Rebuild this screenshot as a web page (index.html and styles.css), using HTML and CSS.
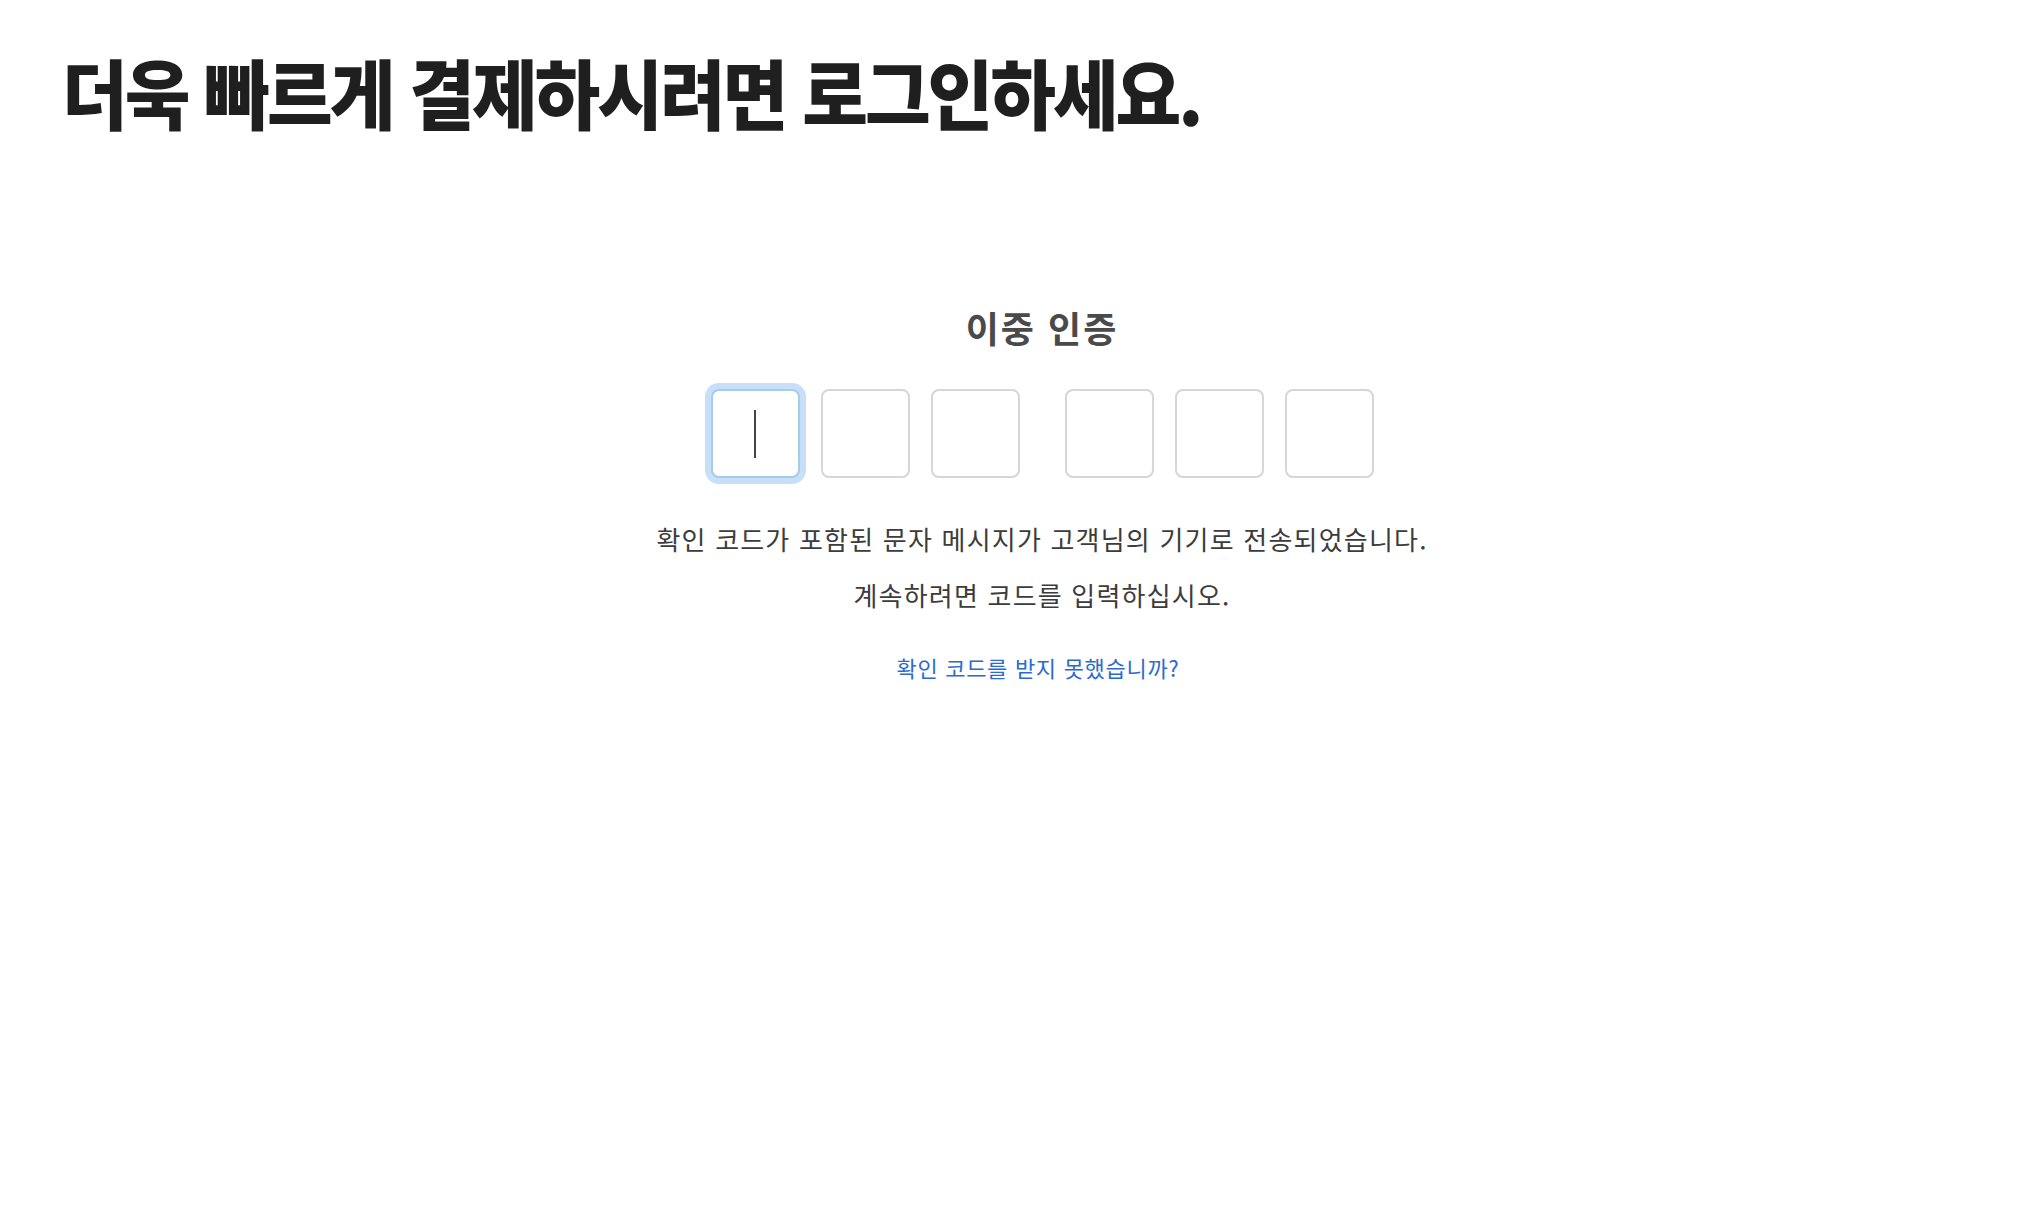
FILE: index.html
```html
<!DOCTYPE html>
<html lang="ko">
<head>
<meta charset="utf-8">
<title>이중 인증</title>
<link rel="stylesheet" href="styles.css">
</head>
<body>
<main class="page">
  <h1 class="headline">더욱 빠르게 결제하시려면 로그인하세요.</h1>
  <section class="verify">
    <h2 class="verify-title">이중 인증</h2>
    <div class="code">
      <div class="code-group">
        <div class="digit is-focused"><span class="caret"></span></div>
        <div class="digit"></div>
        <div class="digit"></div>
      </div>
      <div class="code-group">
        <div class="digit"></div>
        <div class="digit"></div>
        <div class="digit"></div>
      </div>
    </div>
    <p class="msg">확인 코드가 포함된 문자 메시지가 고객님의 기기로 전송되었습니다.<br>계속하려면 코드를 입력하십시오.</p>
    <a class="resend" href="#">확인 코드를 받지 못했습니까?</a>
  </section>
</main>
</body>
</html>
```
FILE: styles.css
```css
html, body {
  margin: 0;
  padding: 0;
  background: #ffffff;
}
body {
  font-family: "Noto Sans CJK KR", "Noto Sans", sans-serif;
  color: #3a3a3a;
}
.page {
  display: flex;
  flex-direction: column;
}
.headline {
  margin: 0;
  padding: 53px 0 0 62px;
  font-size: 76px;
  line-height: 1;
  font-weight: 900;
  letter-spacing: -3.25px;
  word-spacing: 0;
  color: #1f1f1f;
  white-space: nowrap;
  transform: scaleX(0.94);
  transform-origin: 62px 0;
}
.verify {
  display: flex;
  flex-direction: column;
  align-items: center;
  padding-left: 40px;
  padding-top: 180px;
}
.verify-title {
  margin: 0;
  font-size: 36px;
  line-height: 1;
  font-weight: 700;
  letter-spacing: 2px;
  color: #4a4a4a;
}
.code {
  display: flex;
  gap: 45px;
  margin-top: 44px;
}
.code-group {
  display: flex;
  gap: 21px;
}
.digit {
  box-sizing: border-box;
  width: 89px;
  height: 89px;
  border: 2px solid #d6d6d6;
  border-radius: 8px;
  display: flex;
  align-items: center;
  justify-content: center;
  background: #fff;
}
.digit.is-focused {
  border-color: #a5cde6;
  box-shadow: 0 0 0 6px #c8dff9;
}
.caret {
  display: block;
  width: 2px;
  height: 48px;
  background: #444;
}
.msg {
  margin: 33px 0 0;
  font-size: 26px;
  line-height: 56px;
  letter-spacing: 1.2px;
  text-align: center;
  color: #3c3c3c;
}
.resend {
  margin: 28px 8px 0 0;
  font-size: 22px;
  line-height: 32px;
  letter-spacing: 0.7px;
  color: #2b6bcc;
  text-decoration: none;
}
```
